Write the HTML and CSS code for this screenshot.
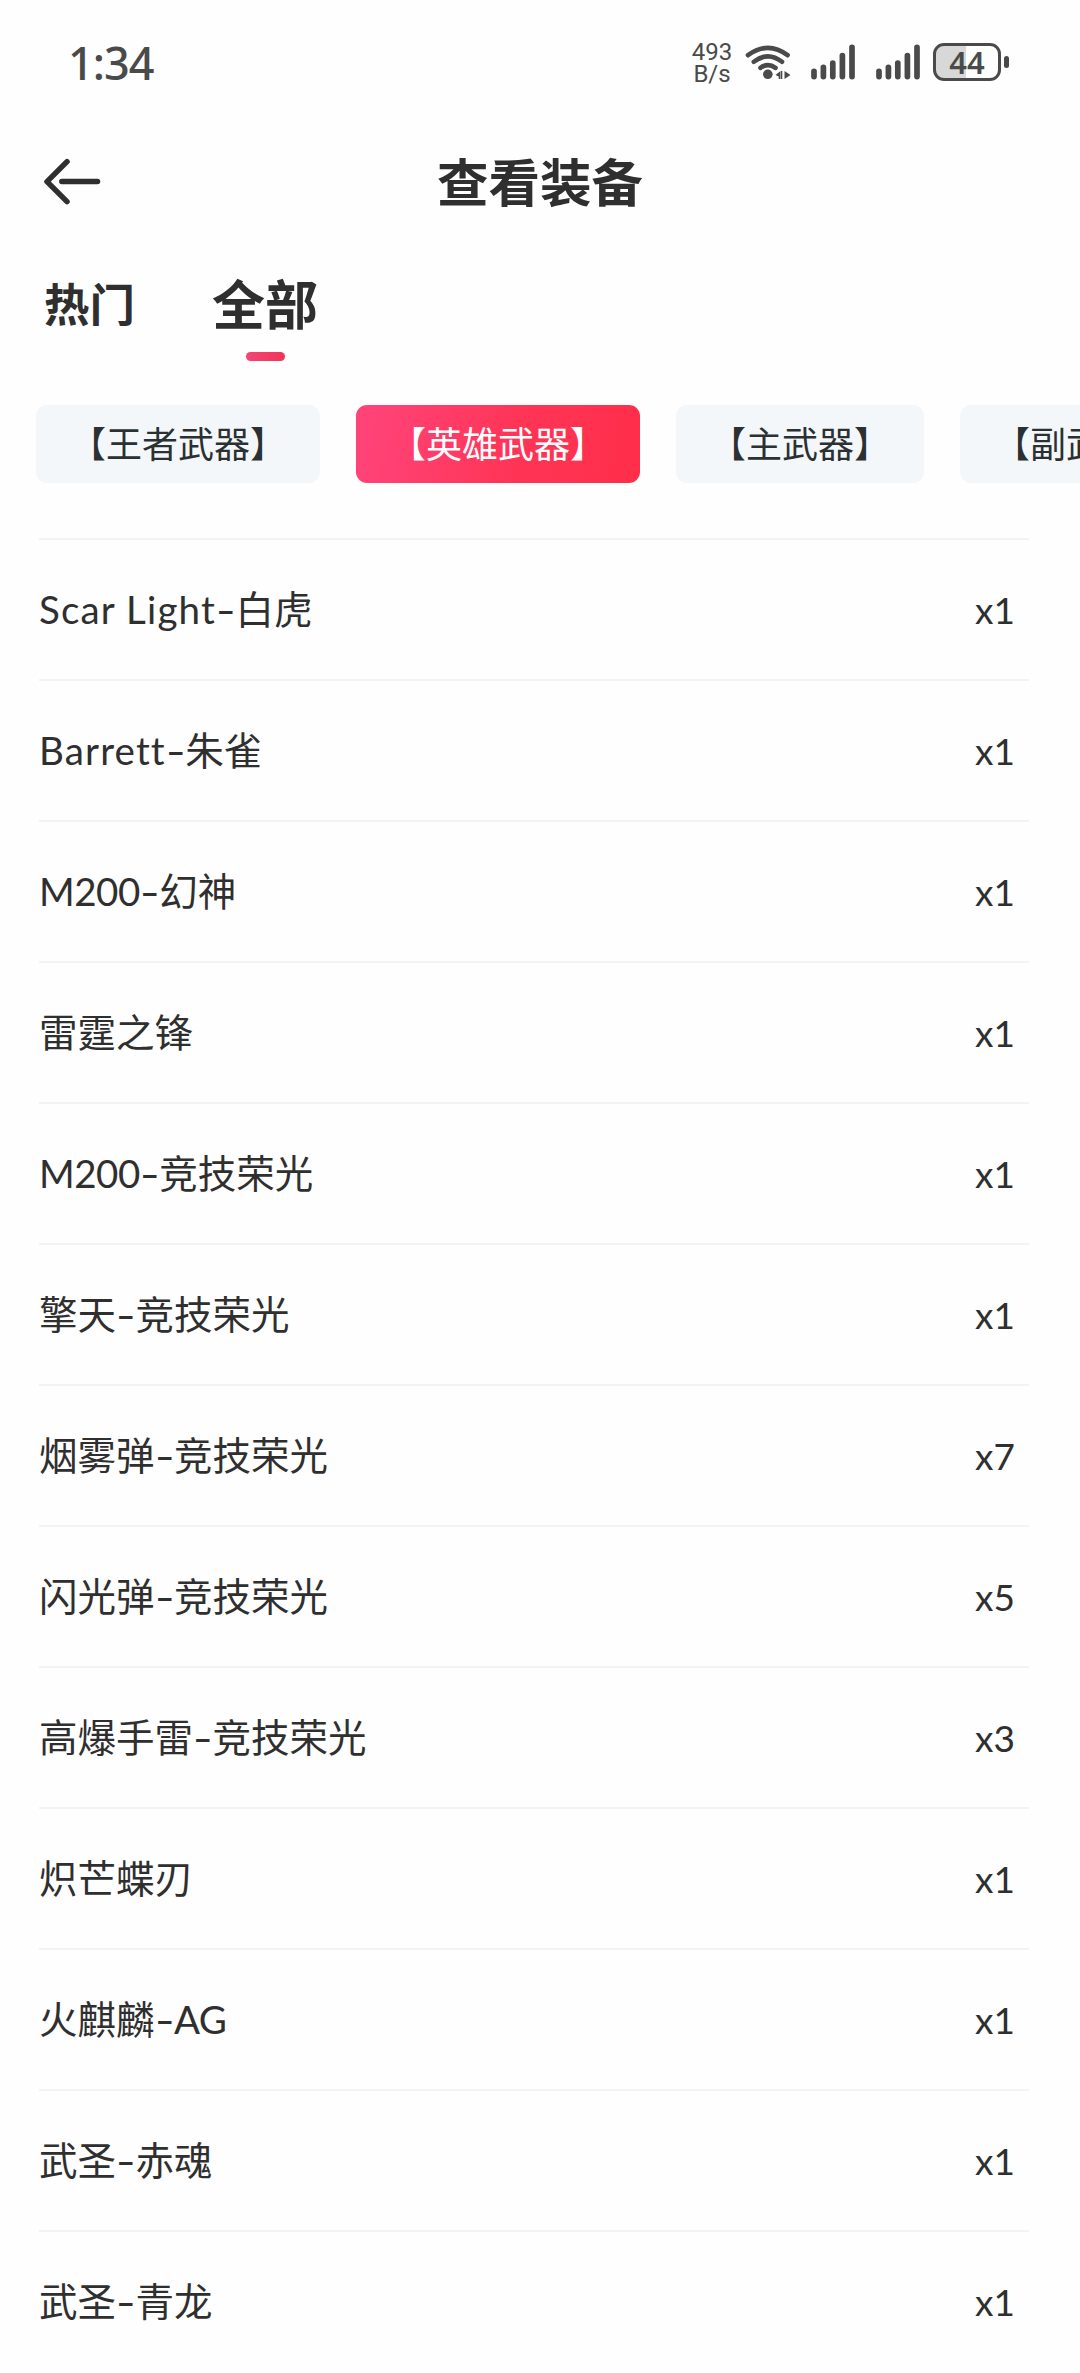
FILE: index.html
```html
<!DOCTYPE html>
<html lang="zh-CN">
<head>
<meta charset="utf-8">
<title>查看装备</title>
<link rel="stylesheet" href="styles.css">
</head>
<body>
<header class="status">
  <span class="time">1:34</span>
  <div class="indicators">
    <div class="speed"><span>493</span><span>B/s</span></div>
    <svg class="wifi" width="48" height="40" viewBox="744 42 48 40" fill="none" stroke="#4a4a4a" stroke-width="4.600" stroke-linecap="round">
      <path d="M748 55.200Q768 40.500 787.600 55.200M753.800 61.800Q768 50.800 782 61.800M760.500 67.800Q768 62.300 775.500 67.800"/>
      <circle cx="767.800" cy="74.300" r="4.800" fill="#4a4a4a" stroke="none"/>
      <path d="M775.500 75l5-4v8h-1.800v-2.500zM784.500 71l6 4-6 4zM781 71h1.300v8H781z" fill="#4a4a4a" stroke="none"/>
    </svg>
    <svg class="signal" width="46" height="40" viewBox="810 42 46 40" stroke="#4a4a4a" stroke-width="5.700" stroke-linecap="round">
      <path d="M814 71.300V76.600M823.400 67.300V76.600M832.800 63.200V76.600M842.400 55.600V76.600M852 47.300V76.600"/>
    </svg>
    <svg class="signal second" width="46" height="40" viewBox="810 42 46 40" stroke="#4a4a4a" stroke-width="5.700" stroke-linecap="round">
      <path d="M814 71.300V76.600M823.400 67.300V76.600M832.800 63.200V76.600M842.400 55.600V76.600M852 47.300V76.600"/>
    </svg>
    <div class="battery"><span class="battery-body">44</span><i class="battery-cap"></i></div>
  </div>
</header>
<nav class="titlebar">
  <svg width="60" height="50" viewBox="42 157 60 50" fill="none" stroke="#2f2f2f" stroke-width="5.500" stroke-linecap="round" stroke-linejoin="round">
    <path d="M67 161.600L47 181.600L67 201.600M61.800 181.600H97.500"/>
  </svg>
  <h1>查看装备</h1>
</nav>
<div class="tabs">
  <span class="tab">热门</span>
  <span class="tab active">全部</span>
</div>
<div class="chips">
  <span class="chip">【王者武器】</span>
  <span class="chip selected">【英雄武器】</span>
  <span class="chip">【主武器】</span>
  <span class="chip">【副武器】</span>
</div>
<ul class="list">
  <li><span><span class="latin">Scar Light</span><i>-</i>白虎</span><b>x1</b></li>
  <li><span><span class="latin">Barrett</span><i>-</i>朱雀</span><b>x1</b></li>
  <li><span><span class="model">M200</span><i>-</i>幻神</span><b>x1</b></li>
  <li><span>雷霆之锋</span><b>x1</b></li>
  <li><span><span class="model">M200</span><i>-</i>竞技荣光</span><b>x1</b></li>
  <li><span>擎天<i>-</i>竞技荣光</span><b>x1</b></li>
  <li><span>烟雾弹<i>-</i>竞技荣光</span><b>x7</b></li>
  <li><span>闪光弹<i>-</i>竞技荣光</span><b>x5</b></li>
  <li><span>高爆手雷<i>-</i>竞技荣光</span><b>x3</b></li>
  <li><span>炽芒蝶刃</span><b>x1</b></li>
  <li><span>火麒麟<i>-</i><span class="model">AG</span></span><b>x1</b></li>
  <li><span>武圣<i>-</i>赤魂</span><b>x1</b></li>
  <li><span>武圣<i>-</i>青龙</span><b>x1</b></li>
</ul>
</body>
</html>
```
FILE: styles.css
```css
* { box-sizing: border-box; }
html { overflow: hidden; }
body {
  margin: 0;
  width: 1080px;
  height: 2373px;
  overflow: hidden;
  background: #fefefe;
  color: #2f2f2f;
  font-family: Lato, "Noto Sans CJK SC", sans-serif;
}
.status {
  display: flex;
  justify-content: space-between;
  align-items: center;
  height: 124px;
  padding: 0 71px 0 68px;
  color: #4a4a4a;
}
.time {
  padding-top: 2px;
  font: 500 45px/60px "Noto Sans", sans-serif;
  letter-spacing: -1px;
}
.indicators { display: flex; align-items: center; }
.speed {
  display: flex;
  flex-direction: column;
  align-items: center;
  width: 40px;
  margin-right: 12px;
  padding-top: 2px;
  font: 400 24px/22px Roboto, sans-serif;
}
.wifi { margin-right: 18px; }
.signal { margin-right: 18.700px; }
.second { margin-right: 12.300px; }
.battery { display: flex; align-items: center; gap: 3px; }
.battery-body {
  width: 68px;
  height: 38px;
  border: 3px solid #4a4a4a;
  border-radius: 11px;
  background: linear-gradient(90deg, #d8d8d8 49%, transparent 49%);
  text-align: center;
  font: 600 31px/32px "Noto Sans", sans-serif;
}
.battery-cap { width: 5px; height: 12px; border-radius: 3px; background: #4a4a4a; }
.titlebar {
  display: grid;
  grid-template-columns: 60px 1fr 60px;
  align-items: center;
  height: 116px;
  padding: 0 42px;
}
h1 {
  margin: 0;
  text-align: center;
  font-size: 51.500px;
  font-weight: 700;
  line-height: 60px;
}
.tabs {
  display: flex;
  align-items: flex-start;
  gap: 77px;
  height: 165px;
  padding: 35px 0 0 44px;
  font-weight: 700;
}
.tab { font-size: 45.500px; line-height: 60px; }
.active {
  display: flex;
  flex-direction: column;
  align-items: center;
  font-size: 53px;
}
.active::after {
  content: "";
  width: 39px;
  height: 9px;
  margin-top: 17px;
  border-radius: 5px;
  background: linear-gradient(90deg, #f34576, #f13456);
}
.chips {
  display: flex;
  gap: 36px;
  height: 133px;
  padding-left: 36px;
  overflow: hidden;
}
.chip {
  flex: none;
  height: 78px;
  padding: 0 34px;
  border-radius: 11px;
  background: #f4f7f9;
  color: #2b3032;
  font-size: 36px;
  line-height: 78px;
  white-space: nowrap;
}
.selected { background: linear-gradient(100deg, #ff4378 5%, #ff3557 55%, #ff2e49); color: #fff; }
.list {
  margin: 0 51px 0 39px;
  padding: 0;
  list-style: none;
}
.list li {
  display: flex;
  justify-content: space-between;
  height: 141px;
  padding-right: 17px;
  border-top: 2px solid #f2f3f4;
  font-size: 38.500px;
  line-height: 139px;
}
.list i {
  display: inline-block;
  width: 19.500px;
  text-align: center;
  font-style: normal;
  transform: scaleX(1.4);
}
.latin { letter-spacing: 1.150px; }
.model { letter-spacing: -0.500px; }
.list b { width: 37px; font-size: 37px; font-weight: 400; white-space: nowrap; }
```
